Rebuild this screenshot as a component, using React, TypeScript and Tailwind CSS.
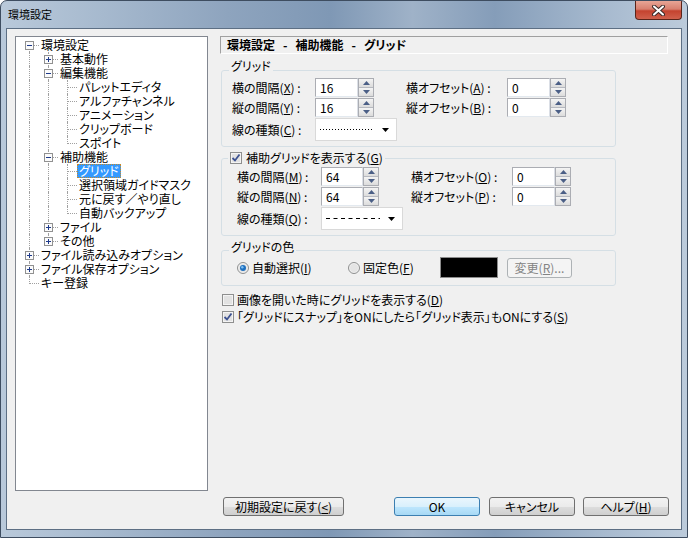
import React from "react";

type Node = { label: string; open?: boolean; closed?: boolean; selected?: boolean; children?: Node[] };
type Row = { label: string; last: boolean; first: boolean; box?: "+" | "-"; rails: boolean[]; selected?: boolean };

const tree: Node[] = [
  {
    label: "環境設定",
    children: [
      { label: "基本動作", closed: true },
      {
        label: "編集機能",
        children: [
          { label: "パレットエディタ" },
          { label: "アルファチャンネル" },
          { label: "アニメーション" },
          { label: "クリップボード" },
          { label: "スポイト" },
        ],
      },
      {
        label: "補助機能",
        children: [
          { label: "グリッド", selected: true },
          { label: "選択領域ガイドマスク" },
          { label: "元に戻す／やり直し" },
          { label: "自動バックアップ" },
        ],
      },
      { label: "ファイル", closed: true },
      { label: "その他", closed: true },
    ],
  },
  { label: "ファイル読み込みオプション", closed: true },
  { label: "ファイル保存オプション", closed: true },
  { label: "キー登録" },
];

function flatten(nodes: Node[], rails: boolean[], out: Row[]) {
  nodes.forEach((n, i) => {
    const last = i === nodes.length - 1;
    out.push({
      label: n.label,
      last,
      first: rails.length === 0 && i === 0,
      box: n.children ? "-" : n.closed ? "+" : undefined,
      rails,
      selected: n.selected,
    });
    if (n.children) flatten(n.children, [...rails, !last], out);
  });
  return out;
}

const rows = flatten(tree, [], []);

const Expander = ({ plus }: { plus: boolean }) => (
  <svg width="9" height="9" className="absolute left-[5px] top-[3px]">
    <rect x="0.5" y="0.5" width="8" height="8" fill="#fbfbfb" stroke="#919191" />
    <path d="M2 4.5h5" stroke="#1e3a8a" />
    {plus && <path d="M4.5 2v5" stroke="#1e3a8a" />}
  </svg>
);

const Tree = () => (
  <div className="h-[455px] w-[193px] shrink-0 border border-[#828790] bg-white pl-[4px] pt-[1px]">
    {rows.map((r, idx) => (
      <div key={idx} className="flex h-[14px] whitespace-nowrap">
        {r.rails.map((on, i) => (
          <div key={i} className="relative h-full w-[19px] shrink-0">
            {on && <span className="absolute left-[9px] top-0 h-[14px] border-l border-dotted border-[#a0a0a0]" />}
          </div>
        ))}
        <div className="relative h-full w-[19px] shrink-0">
          <span
            className={`absolute left-[9px] border-l border-dotted border-[#a0a0a0] ${
              r.first ? "top-[7px] h-[7px]" : r.last ? "top-0 h-[8px]" : "top-0 h-[14px]"
            }`}
          />
          <span className="absolute left-[10px] top-[7px] w-[9px] border-t border-dotted border-[#a0a0a0]" />
          {r.box && <Expander plus={r.box === "+"} />}
        </div>
        <span
          className={`block h-[14px] px-[2px] leading-[14px] ${
            r.selected ? "bg-[#3399ff] text-white outline outline-1 outline-dotted -outline-offset-1 outline-[#c48a2a]" : ""
          }`}
        >
          {r.label}
        </span>
      </div>
    ))}
  </div>
);

const Arrow = ({ up }: { up: boolean }) => (
  <svg width="7" height="4">
    <path d={up ? "M0 4L3.5 0L7 4Z" : "M0 0L3.5 4L7 0Z"} fill="#4b5f86" />
  </svg>
);

const Spin = ({ value, width }: { value: string; width: string }) => (
  <div className={`flex h-[19px] shrink-0 ${width}`}>
    <div className="flex-1 border border-[#abadb3] border-b-[#e3e9ef] border-r-[#dbdfe6] bg-white pl-[4px] leading-[17px]">
      {value}
    </div>
    <div className="flex w-[16px] flex-col border border-[#abadb3] bg-white">
      <div className="flex flex-1 items-center justify-center border-b border-[#b6b9c0] bg-[linear-gradient(#f4f4f4,#dcdcdc)]">
        <Arrow up />
      </div>
      <div className="flex flex-1 items-center justify-center bg-[linear-gradient(#f4f4f4,#dcdcdc)]">
        <Arrow up={false} />
      </div>
    </div>
  </div>
);

const Combo = ({ dashed }: { dashed?: boolean }) => (
  <div className="flex h-[23px] w-[82px] shrink-0 items-center border border-[#d9d9d9] bg-white pl-[4px] pr-[4px]">
    <svg width="56" height="3" className="flex-none">
      {dashed ? (
        <line x1="0" y1="1.5" x2="54" y2="1.5" stroke="#000" strokeDasharray="4 3.5" />
      ) : (
        <line x1="0" y1="1.5" x2="54" y2="1.5" stroke="#000" strokeDasharray="1 2" />
      )}
    </svg>
    <svg width="7" height="4" className="ml-auto mr-[3px]">
      <path d="M0 0L3.5 4L7 0Z" fill="#000" />
    </svg>
  </div>
);

const CheckBox = ({ checked }: { checked?: boolean }) => (
  <svg width="12" height="12" className="shrink-0">
    <rect x="0.5" y="0.5" width="11" height="11" fill="#f4f4f4" stroke="#8e8f8f" />
    <rect x="2" y="2" width="8" height="8" fill="#e2e2e2" />
    {checked && <path d="M2.5 6L5 8.5L9.5 2.5" stroke="#3d5291" strokeWidth="1.8" fill="none" />}
  </svg>
);

const Radio = ({ checked }: { checked?: boolean }) => (
  <svg width="12" height="12" className="shrink-0">
    <circle cx="6" cy="6" r="5.5" fill="#f0f0f0" stroke="#8e8f8f" />
    <circle cx="6" cy="6" r="4" fill="#e4e4e4" />
    {checked && <circle cx="6" cy="6" r="3" fill="#1d6fbf" />}
    {checked && <circle cx="5.3" cy="5.2" r="1.2" fill="#7fc0f2" />}
  </svg>
);

const Key = ({ k }: { k: string }) => <span className="underline underline-offset-1">{k}</span>;

const Panel = () => (
  <div className="ml-[12px] w-[448px] shrink-0">
    <div className="flex h-[18px] border border-[#a0a0a0] border-b-white border-r-white pl-[6px] font-bold leading-[16px]">
      <span>環境設定</span>
      <span className="mx-[8px]">-</span>
      <span>補助機能</span>
      <span className="mx-[8px]">-</span>
      <span>グリッド</span>
    </div>

    <div className="relative ml-[1px] mt-[16px] h-[77px] w-[395px] rounded-[3px] border border-[#d5dfe5] pl-[10px] pt-[7px]">
      <span className="absolute left-[7px] top-[-12px] bg-[#f0f0f0] px-[2px]">グリッド</span>
      <div className="flex h-[20px] items-start leading-[19px]">
        <span className="w-[83px]">横の間隔(<Key k="X" />) :</span>
        <Spin value="16" width="w-[59px]" />
        <span className="ml-[32px] w-[101px]">横オフセット(<Key k="A" />) :</span>
        <Spin value="0" width="w-[59px]" />
      </div>
      <div className="flex h-[20px] items-start leading-[19px]">
        <span className="w-[83px]">縦の間隔(<Key k="Y" />) :</span>
        <Spin value="16" width="w-[59px]" />
        <span className="ml-[32px] w-[101px]">縦オフセット(<Key k="B" />) :</span>
        <Spin value="0" width="w-[59px]" />
      </div>
      <div className="flex h-[23px] items-center">
        <span className="w-[83px]">線の種類(<Key k="C" />) :</span>
        <Combo />
      </div>
    </div>

    <div className="relative ml-[1px] mt-[11px] h-[78px] w-[395px] rounded-[3px] border border-[#d5dfe5] pl-[15px] pt-[8px]">
      <span className="absolute left-[6px] top-[-8px] flex items-center gap-[4px] bg-[#f0f0f0] px-[2px]">
        <CheckBox checked />
        <span>補助グリッドを表示する(<Key k="G" />)</span>
      </span>
      <div className="flex h-[20px] items-start leading-[19px]">
        <span className="w-[84px]">横の間隔(<Key k="M" />) :</span>
        <Spin value="64" width="w-[58px]" />
        <span className="ml-[32px] w-[101px]">横オフセット(<Key k="O" />) :</span>
        <Spin value="0" width="w-[59px]" />
      </div>
      <div className="flex h-[20px] items-start leading-[19px]">
        <span className="w-[84px]">縦の間隔(<Key k="N" />) :</span>
        <Spin value="64" width="w-[58px]" />
        <span className="ml-[32px] w-[101px]">縦オフセット(<Key k="P" />) :</span>
        <Spin value="0" width="w-[59px]" />
      </div>
      <div className="flex h-[23px] items-center">
        <span className="w-[84px]">線の種類(<Key k="Q" />) :</span>
        <Combo dashed />
      </div>
    </div>

    <div className="relative ml-[1px] mt-[14px] h-[36px] w-[395px] rounded-[3px] border border-[#d5dfe5] pl-[15px] pt-[6px]">
      <span className="absolute left-[7px] top-[-11px] bg-[#f0f0f0] px-[2px]">グリッドの色</span>
      <div className="flex h-[21px] items-center">
        <div className="flex w-[111px] items-center gap-[3px]">
          <Radio checked />
          <span>自動選択(<Key k="I" />)</span>
        </div>
        <div className="flex w-[92px] items-center gap-[3px]">
          <Radio />
          <span>固定色(<Key k="F" />)</span>
        </div>
        <div className="h-[21px] w-[58px] border border-[#8c8c8c] bg-black" />
        <div className="ml-[9px] flex h-[20px] w-[65px] items-center justify-center rounded-[3px] border border-[#adb2b5] bg-[#f4f4f4] text-[#838383]">
          変更(<Key k="R" />)...
        </div>
      </div>
    </div>

    <div className="mt-[5px] flex h-[17px] items-center gap-[3px] pl-[2px]">
      <CheckBox />
      <span>画像を開いた時にグリッドを表示する(<Key k="D" />)</span>
    </div>
    <div className="flex h-[17px] items-center gap-[3px] pl-[2px]">
      <CheckBox checked />
      <span>「グリッドにスナップ」をONにしたら「グリッド表示」もONにする(<Key k="S" />)</span>
    </div>
  </div>
);

const Btn = ({ children, def, w, className = "" }: { children: React.ReactNode; def?: boolean; w: string; className?: string }) => (
  <div
    className={`flex h-[19px] items-center justify-center rounded-[3px] border ${w} ${className} ${
      def
        ? "border-[#3c7fb1] bg-[linear-gradient(#eaf6fd_0%,#d9f0fc_50%,#bee6fd_51%,#a7d9f5_100%)]"
        : "border-[#707070] bg-[linear-gradient(#f2f2f2_0%,#ebebeb_50%,#dddddd_51%,#cfcfcf_100%)]"
    }`}
  >
    {children}
  </div>
);

export default function App() {
  return (
    <div className="flex h-[538px] w-[688px] flex-col overflow-hidden rounded-t-[7px] border border-[#3e4d60] bg-[linear-gradient(90deg,#b9c9da_0%,#a6b9ce_15%,#8ea4be_33%,#7f98b5_48%,#9fb2c8_60%,#859db9_72%,#a7bacf_88%,#bccbdb_100%)] px-[5px] pb-[7px] font-['Noto_Sans_CJK_JP',sans-serif] text-[12px] leading-[14px] text-black [font-feature-settings:'palt']">
      <div className="flex h-[27px] shrink-0 items-start justify-between">
        <span className="ml-[2px] mt-[6px] text-[11px]">環境設定</span>
        <div className="flex h-[19px] w-[47px] items-center justify-center rounded-b-[4px] border border-t-0 border-[#5a2419] bg-[linear-gradient(#e8a596_0%,#d8806f_45%,#c4432f_55%,#d0604c_100%)]">
          <svg width="13" height="11">
            <path d="M2 1.5L11 9.5M11 1.5L2 9.5" stroke="#3b2a28" strokeWidth="4" strokeLinecap="round" />
            <path d="M2 1.5L11 9.5M11 1.5L2 9.5" stroke="#ffffff" strokeWidth="2" strokeLinecap="round" />
          </svg>
        </div>
      </div>
      <div className="flex h-[502px] shrink-0 flex-col border border-[#5d6f84] bg-[#f0f0f0]">
        <div className="flex pl-[8px] pt-[7px]">
          <Tree />
          <Panel />
        </div>
        <div className="ml-[216px] mt-[6px] flex">
          <Btn w="w-[121px]">初期設定に戻す(<Key k="<" />)</Btn>
          <Btn w="w-[86px]" def className="ml-[50px]">OK</Btn>
          <Btn w="w-[86px]" className="ml-[9px]">キャンセル</Btn>
          <Btn w="w-[86px]" className="ml-[8px]">ヘルプ(<Key k="H" />)</Btn>
        </div>
      </div>
    </div>
  );
}
